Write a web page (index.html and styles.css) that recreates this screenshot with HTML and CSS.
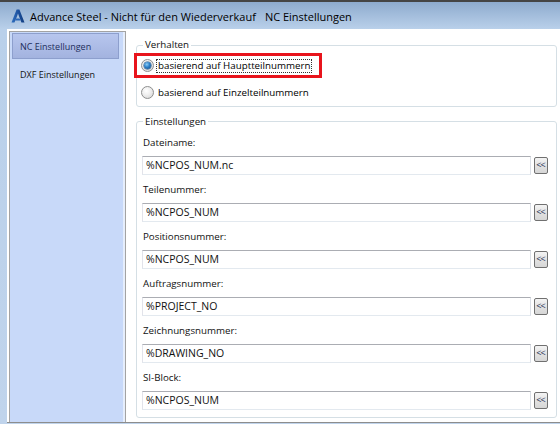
FILE: index.html
```html
<!DOCTYPE html>
<html lang="de">
<head>
<meta charset="utf-8">
<title>NC Einstellungen</title>
<link rel="stylesheet" href="styles.css">
</head>
<body>
<div class="window">
  <div class="titlebar">
    <svg class="logo" width="14" height="14" viewBox="0 0 14 14" aria-hidden="true">
      <defs>
        <linearGradient id="lg" x1="0" y1="0" x2="1" y2="0">
          <stop offset="0" stop-color="#2f6fc0"/>
          <stop offset="0.55" stop-color="#1b4f9c"/>
          <stop offset="1" stop-color="#123d7e"/>
        </linearGradient>
      </defs>
      <polygon points="0.5,13.5 5.6,0.5 8.4,0.5 13.5,13.5 10.4,13.5 7,4.6 4.6,11 3.4,13.5" fill="url(#lg)"/>
      <polygon points="5.2,9.6 8.6,9.6 9.4,11.6 4.4,11.6" fill="#2a66b6"/>
    </svg>
    <span class="title">Advance Steel - Nicht für den Wiederverkauf</span>
    <span class="title title-sub">NC Einstellungen</span>
  </div>
  <div class="client">
    <nav class="sidebar">
      <div class="nav-item is-selected">NC Einstellungen</div>
      <div class="nav-item">DXF Einstellungen</div>
    </nav>
    <main class="main">
      <fieldset class="group group-behavior">
        <legend class="group-legend">Verhalten</legend>
        <div class="radio-row">
          <span class="radio is-checked"></span>
          <span class="radio-text is-focused">basierend auf Hauptteilnummern</span>
          <span class="highlight"></span>
        </div>
        <div class="radio-row">
          <span class="radio"></span>
          <span class="radio-text">basierend auf Einzelteilnummern</span>
        </div>
      </fieldset>
      <fieldset class="group group-settings">
        <legend class="group-legend">Einstellungen</legend>
        <div class="field">
          <div class="field-label">Dateiname:</div>
          <div class="field-row"><div class="textbox">%NCPOS_NUM.nc</div><div class="pick">&lt;&lt;</div></div>
        </div>
        <div class="field">
          <div class="field-label">Teilenummer:</div>
          <div class="field-row"><div class="textbox">%NCPOS_NUM</div><div class="pick">&lt;&lt;</div></div>
        </div>
        <div class="field">
          <div class="field-label">Positionsnummer:</div>
          <div class="field-row"><div class="textbox">%NCPOS_NUM</div><div class="pick">&lt;&lt;</div></div>
        </div>
        <div class="field">
          <div class="field-label">Auftragsnummer:</div>
          <div class="field-row"><div class="textbox">%PROJECT_NO</div><div class="pick">&lt;&lt;</div></div>
        </div>
        <div class="field">
          <div class="field-label">Zeichnungsnummer:</div>
          <div class="field-row"><div class="textbox">%DRAWING_NO</div><div class="pick">&lt;&lt;</div></div>
        </div>
        <div class="field">
          <div class="field-label">SI-Block:</div>
          <div class="field-row"><div class="textbox">%NCPOS_NUM</div><div class="pick">&lt;&lt;</div></div>
        </div>
      </fieldset>
    </main>
  </div>
</div>
</body>
</html>
```
FILE: styles.css
```css
* { box-sizing: border-box; }

html, body {
  margin: 0;
  padding: 0;
  background: #ffffff;
}

body {
  font-family: "Open Sans", "Noto Sans", "DejaVu Sans", sans-serif;
  color: #000000;
}

.window {
  width: 560px;
  height: 424px;
  overflow: hidden;
  border-top: 2px solid #454545;
  background: linear-gradient(to bottom, #8eabce 0, #b9d0ea 27px, #c0d4ec 100%);
}

.titlebar {
  height: 27px;
  display: flex;
  align-items: center;
  padding-left: 11px;
  padding-top: 1px;
}

.logo {
  flex: none;
  width: 14px;
  height: 14px;
}

.title {
  font-size: 11px;
  color: #000;
  white-space: nowrap;
  margin-left: 5px;
}

.title-sub {
  margin-left: 9px;
}

.client {
  margin-left: 7px;
  height: 394px;
  background: #ffffff;
  border-bottom: 1px solid #8d8d8d;
  display: flex;
  align-items: stretch;
}

.sidebar {
  flex: none;
  width: 117px;
  margin: 2px 0 0 2px;
  border: 1px solid #a3a3a3;
  border-bottom: none;
  background: #c8d9f9;
  padding: 1px 6px 0 2px;
  box-shadow: inset -2px 0 0 #e6eefc;
}

.nav-item {
  height: 26px;
  display: flex;
  align-items: center;
  padding-left: 7px;
  font-size: 9px;
  color: #141414;
  white-space: nowrap;
  border: 1px solid transparent;
  margin-bottom: 2px;
}

.nav-item.is-selected {
  background: linear-gradient(to bottom, #b7c6ee, #a3b3df);
  border-color: #8d9fcd;
  color: #1d2e5c;
}

.main {
  flex: none;
  width: 421px;
  margin-left: 10px;
  padding-top: 9px;
}

.group {
  margin: 0;
  border: 1px solid #d5dfe5;
  border-radius: 3px;
  padding: 0 0 0 5px;
  min-width: 0;
}

.group-legend {
  font-size: 9.75px;
  line-height: 14px;
  padding: 0 2px;
  margin-left: 1px;
  color: #111111;
}

.group-behavior {
  padding-bottom: 0;
}

.radio-row {
  position: relative;
  height: 27px;
  display: flex;
  align-items: center;
  font-size: 9.75px;
}

.radio {
  flex: none;
  width: 13px;
  height: 13px;
  margin-left: -1px;
  border-radius: 50%;
  border: 1px solid #8e8f8f;
  background: radial-gradient(circle at 40% 35%, #ffffff 0, #f0f0f0 40%, #d2d2d2 100%);
  display: flex;
  align-items: center;
  justify-content: center;
}

.radio.is-checked::after {
  content: "";
  width: 7px;
  height: 7px;
  border-radius: 50%;
  background: radial-gradient(circle at 40% 35%, #8dcdf5 0, #2b7fc8 45%, #11457c 100%);
  box-shadow: 0 0 0 0.5px #1e4d7c;
}

.radio-text {
  margin-left: 2px;
  padding: 0 1px;
  line-height: 12px;
  border: 1px dotted transparent;
  white-space: nowrap;
}

.radio-text.is-focused {
  border-color: #333333;
}

.highlight {
  position: absolute;
  left: -8px;
  top: 1px;
  width: 188px;
  height: 25px;
  border: 3px solid #e8141c;
  pointer-events: none;
}

.group-settings {
  margin-top: 8px;
  padding-bottom: 7px;
}

.group-settings .group-legend {
  line-height: 13px;
}

.field-label {
  height: 28px;
  display: flex;
  align-items: center;
  font-size: 9.75px;
  padding-left: 1px;
  white-space: nowrap;
  color: #111111;
}

.field-row {
  height: 19px;
  display: flex;
  align-items: center;
  gap: 3px;
}

.textbox {
  width: 389px;
  height: 19px;
  border: 1px solid;
  border-color: #abadb3 #dbdfe6 #e3e9ef #e2e3ea;
  background: #ffffff;
  padding-left: 3px;
  font-size: 10.5px;
  line-height: 17px;
  color: #111111;
  white-space: nowrap;
}

.pick {
  flex: none;
  width: 14px;
  height: 17px;
  border: 1px solid #707070;
  border-radius: 2px;
  background: linear-gradient(to bottom, #f4f4f4, #e2e2e2 50%, #d6d6d6);
  font-size: 9px;
  line-height: 14px;
  text-align: center;
  color: #1d2f52;
  letter-spacing: -1px;
  padding-right: 1px;
}
```
